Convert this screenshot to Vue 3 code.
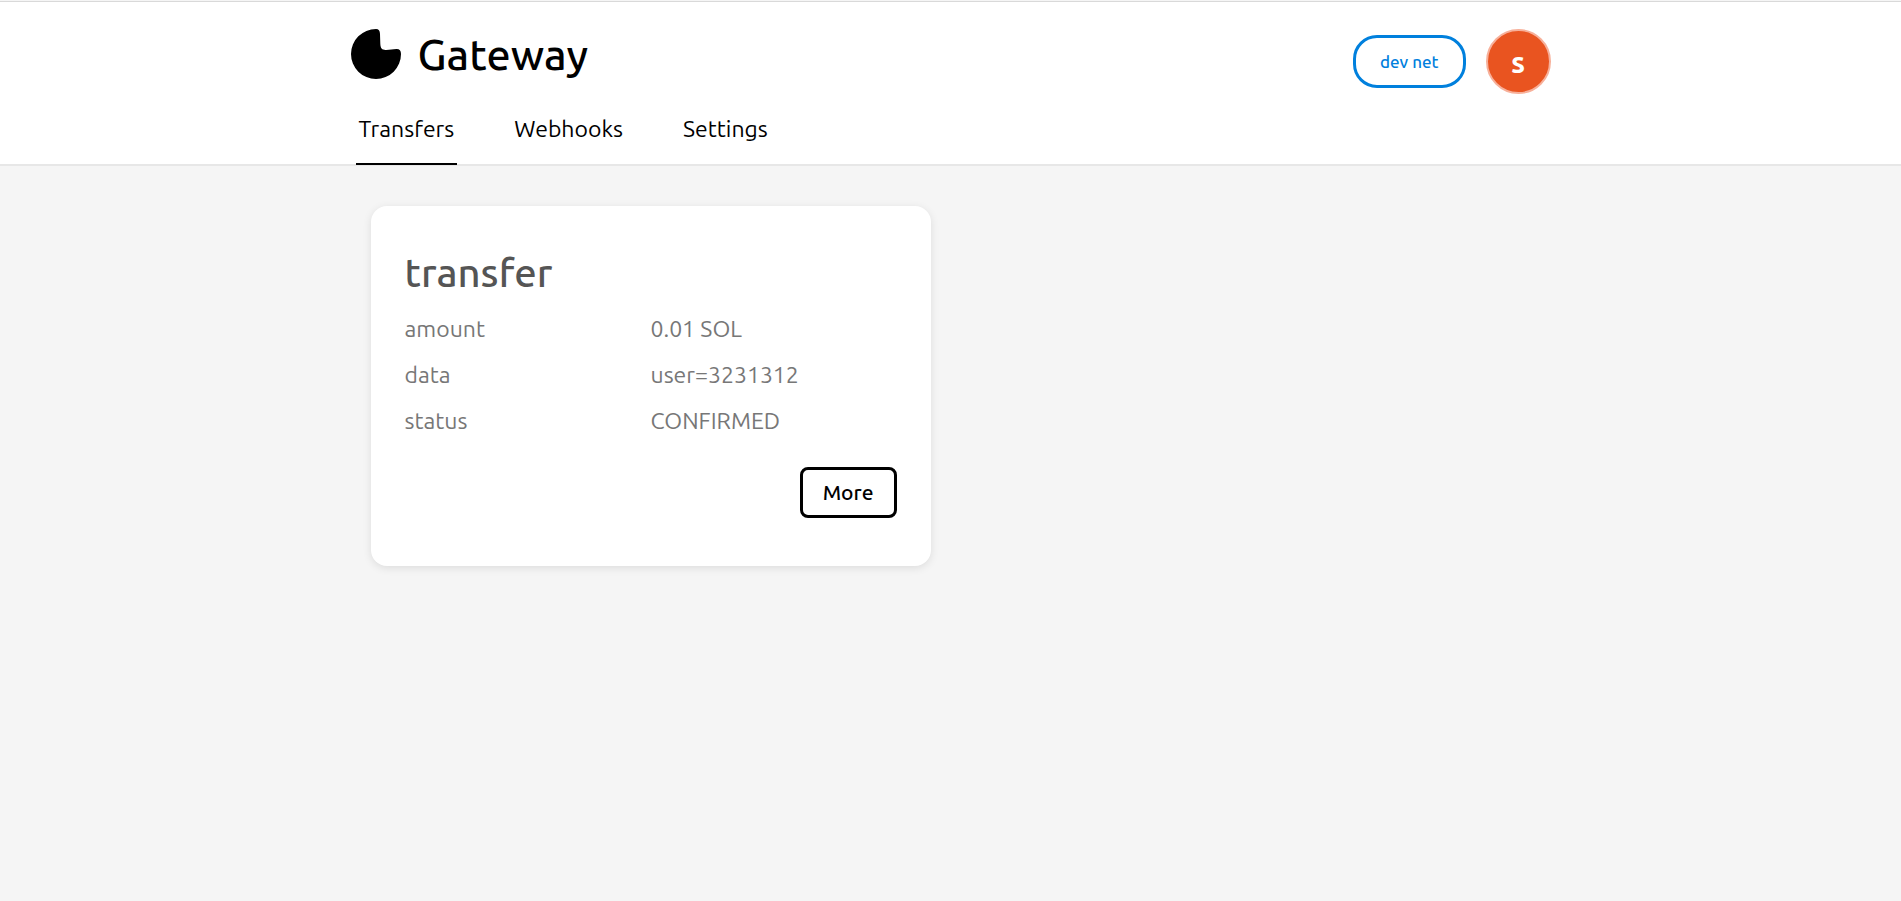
<script setup>
const tabs = [
  { label: 'Transfers', href: '#transfers', active: true },
  { label: 'Webhooks', href: '#webhooks', active: false },
  { label: 'Settings', href: '#settings', active: false },
]

const transfers = [
  {
    id: 1,
    title: 'transfer',
    fields: [
      { name: 'amount', value: '0.01 SOL' },
      { name: 'data', value: 'user=3231312' },
      { name: 'status', value: 'CONFIRMED' },
    ],
  },
]
</script>

<template>
  <div class="page">
    <header class="header">
      <div class="container">
        <div class="top">
          <a class="brand" href="#">
            <svg class="logo" viewBox="0 0 50 50" aria-hidden="true">
              <path
                d="M25 0C27.7 0 28.9 1.7 29 5L29.3 14.5C29.5 19.5 31 21 35 20.9C39.5 20.8 41.5 20.2 45.5 20C48.5 19.9 50 21.5 50 25A25 25 0 1 1 25 0Z"
              />
            </svg>
            <span class="name">Gateway</span>
          </a>
          <div class="account">
            <button class="network" type="button">dev net</button>
            <button class="avatar" type="button">s</button>
          </div>
        </div>
        <nav class="tabs">
          <a
            v-for="tab in tabs"
            :key="tab.label"
            class="tab"
            :class="{ active: tab.active }"
            :href="tab.href"
            >{{ tab.label }}</a
          >
        </nav>
      </div>
    </header>
    <main class="container cards">
      <article v-for="item in transfers" :key="item.id" class="card">
        <h2 class="title">{{ item.title }}</h2>
        <dl class="fields">
          <template v-for="field in item.fields" :key="field.name">
            <dt>{{ field.name }}</dt>
            <dd>{{ field.value }}</dd>
          </template>
        </dl>
        <div class="actions">
          <button class="more" type="button">More</button>
        </div>
      </article>
    </main>
  </div>
</template>

<style>
body {
  background: #f5f5f5;
}
</style>

<style scoped>
.page,
.page * {
  box-sizing: border-box;
}
.page {
  min-height: 100vh;
  padding-top: 1px;
  background: #f5f5f5;
  color: #000;
  font-family: Ubuntu, 'Noto Sans', 'Open Sans', sans-serif;
}
.header {
  border-top: 1px solid #d9d9d9;
  border-bottom: 2px solid #e7e7e7;
  background: #fff;
}
.container {
  width: 100%;
  max-width: 1200px;
  margin: 0 auto;
}
.top {
  display: flex;
  justify-content: space-between;
  align-items: flex-start;
  padding-top: 27px;
}
.brand {
  display: flex;
  align-items: center;
  gap: 17px;
  color: #000;
  text-decoration: none;
}
.logo {
  width: 50px;
  height: 50px;
}
.name {
  font-size: 43px;
  font-weight: 500;
  line-height: 50px;
}
.account {
  display: flex;
  align-items: center;
  gap: 20px;
}
button {
  padding: 0;
  background: #fff;
  font-family: inherit;
  cursor: pointer;
}
.network {
  padding: 0 24px;
  border: 3px solid #0080dd;
  border-radius: 24px;
  color: #0080dd;
  font-size: 17px;
  font-weight: 500;
  line-height: 47px;
}
.avatar {
  width: 65px;
  height: 65px;
  border: 2px solid #f7b09a;
  border-radius: 50%;
  background: #e95420;
  color: #fff;
  font-size: 30px;
  font-weight: 700;
  line-height: 60px;
}
.tabs {
  display: flex;
  gap: 54px;
  margin: 0 5px -1px;
}
.tab {
  padding: 18px 3px 17px;
  border-bottom: 2px solid transparent;
  color: #000;
  font-size: 23px;
  line-height: 34px;
  text-decoration: none;
}
.tab.active {
  border-color: #000;
}
.cards {
  display: grid;
  grid-template-columns: 1fr 1fr;
  gap: 40px;
  padding: 40px 20px;
}
.card {
  padding: 43px 34px 48px;
  border-radius: 16px;
  background: #fff;
  box-shadow: 0 2px 8px rgba(0, 0, 0, 0.1);
}
.title {
  margin: 0 0 9px;
  color: #555;
  font-size: 40px;
  font-weight: 500;
  line-height: 48px;
}
.fields {
  display: grid;
  grid-template-columns: 1fr 1fr;
  margin: 0;
  color: #777;
  font-size: 23px;
  line-height: 46px;
}
dd {
  margin: 0;
}
.actions {
  display: flex;
  justify-content: flex-end;
  margin-top: 23px;
}
.more {
  padding: 0 20px;
  border: 3px solid #000;
  border-radius: 8px;
  color: #000;
  font-size: 21px;
  font-weight: 500;
  line-height: 45px;
}
</style>
